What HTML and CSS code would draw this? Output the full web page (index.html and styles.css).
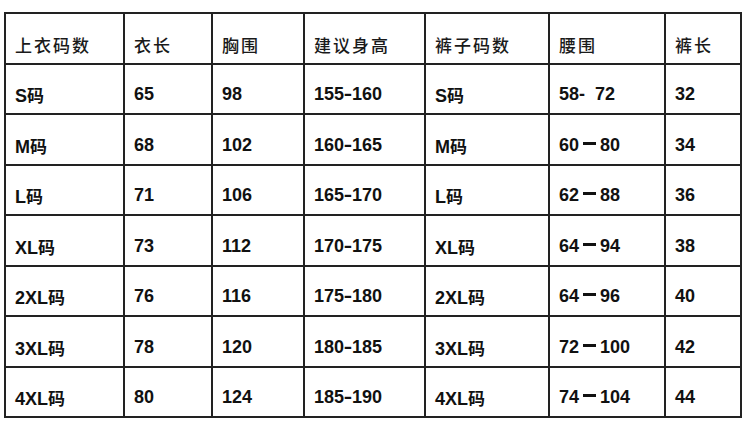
FILE: index.html
```html
<!DOCTYPE html>
<html lang="zh">
<head>
<meta charset="utf-8">
<link rel="stylesheet" href="styles.css">
</head>
<body>
<table class="size-table">
  <colgroup>
    <col class="c1"><col class="c2"><col class="c3"><col class="c4"><col class="c5"><col class="c6"><col class="c7">
  </colgroup>
  <thead>
    <tr>
      <th>上衣码数</th><th>衣长</th><th>胸围</th><th>建议身高</th><th>裤子码数</th><th>腰围</th><th>裤长</th>
    </tr>
  </thead>
  <tbody>
    <tr><td>S<span class="cjk">码</span></td><td>65</td><td>98</td><td>155<span class="dash">-</span>160</td><td>S<span class="cjk">码</span></td><td>58- &nbsp;72</td><td>32</td></tr>
    <tr><td>M<span class="cjk">码</span></td><td>68</td><td>102</td><td>160<span class="dash">-</span>165</td><td>M<span class="cjk">码</span></td><td>60<span class="bar" aria-label="—"></span>80</td><td>34</td></tr>
    <tr><td>L<span class="cjk">码</span></td><td>71</td><td>106</td><td>165<span class="dash">-</span>170</td><td>L<span class="cjk">码</span></td><td>62<span class="bar" aria-label="—"></span>88</td><td>36</td></tr>
    <tr><td>XL<span class="cjk">码</span></td><td>73</td><td>112</td><td>170<span class="dash">-</span>175</td><td>XL<span class="cjk">码</span></td><td>64<span class="bar" aria-label="—"></span>94</td><td>38</td></tr>
    <tr><td>2XL<span class="cjk">码</span></td><td>76</td><td>116</td><td>175<span class="dash">-</span>180</td><td>2XL<span class="cjk">码</span></td><td>64<span class="bar" aria-label="—"></span>96</td><td>40</td></tr>
    <tr><td>3XL<span class="cjk">码</span></td><td>78</td><td>120</td><td>180<span class="dash">-</span>185</td><td>3XL<span class="cjk">码</span></td><td>72<span class="bar" aria-label="—"></span>100</td><td>42</td></tr>
    <tr><td>4XL<span class="cjk">码</span></td><td>80</td><td>124</td><td>185<span class="dash">-</span>190</td><td>4XL<span class="cjk">码</span></td><td>74<span class="bar" aria-label="—"></span>104</td><td>44</td></tr>
  </tbody>
</table>
</body>
</html>
```

FILE: styles.css
```css
html, body {
  margin: 0;
  padding: 0;
  background: #fff;
}
body {
  padding: 12px 0 0 4px;
  font-family: "Liberation Sans", "Noto Sans CJK SC", sans-serif;
  color: #111;
}
.size-table {
  border-collapse: collapse;
  table-layout: fixed;
  width: 738px;
}
.c1 { width: 119px; }
.c2 { width: 88px; }
.c3 { width: 92px; }
.c4 { width: 121px; }
.c5 { width: 124px; }
.c6 { width: 116px; }
.c7 { width: 76px; }
.size-table th,
.size-table td {
  border: 2px solid #222;
  height: 50.5px;
  box-sizing: border-box;
  padding: 12px 0 0 9px;
  text-align: left;
  vertical-align: middle;
  white-space: nowrap;
}
.size-table th {
  font-family: "Noto Sans CJK SC", sans-serif;
  font-weight: 500;
  font-size: 17px;
  letter-spacing: 2px;
  color: #1a1a1a;
}
.size-table td {
  font-size: 18px;
  font-weight: bold;
}
.cjk {
  font-family: "Noto Sans CJK SC", sans-serif;
  font-weight: 700;
  font-size: 17px;
}
.dash {
  display: inline-block;
  transform: scaleX(1.4);
  margin: 0 1px;
}
.bar {
  display: inline-block;
  width: 13px;
  height: 3px;
  margin: 0 4px;
  background: #111;
  vertical-align: 6px;
}
```
